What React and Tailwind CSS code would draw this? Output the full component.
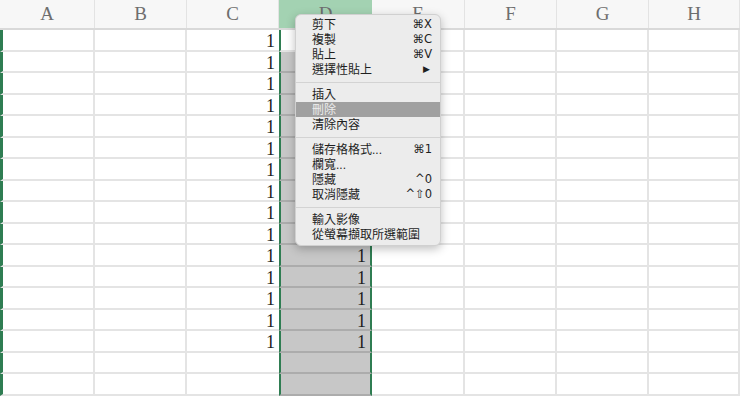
import React from 'react';

const cols = ['A', 'B', 'C', 'D', 'E', 'F', 'G', 'H'];
const widths = ['w-[95px]', 'w-[92px]', 'w-[92px]', 'w-[93px]', 'w-[93px]', 'w-[92px]', 'w-[92px]', 'w-[91px]'];
const rowCount = 17;

const menu = [
  [
    { label: '剪下', key: '⌘X' },
    { label: '複製', key: '⌘C' },
    { label: '貼上', key: '⌘V' },
    { label: '選擇性貼上', key: '▶', arrow: true },
  ],
  [
    { label: '插入' },
    { label: '刪除', active: true },
    { label: '清除內容' },
  ],
  [
    { label: '儲存格格式...', key: '⌘1' },
    { label: '欄寬...' },
    { label: '隱藏', key: '^0' },
    { label: '取消隱藏', key: '^⇧0' },
  ],
  [
    { label: '輸入影像' },
    { label: '從螢幕擷取所選範圍' },
  ],
];

const Cell = ({ col, row }) => {
  const isD = col === 3;
  // D1..D10 sit under the context menu
  const hasOne = (col === 2 && row < 15) || (isD && row >= 10 && row < 15);
  let cls = 'h-full flex items-center justify-end pr-[4px] pt-[3px] border-b-2 ';
  if (isD) {
    cls += row === 0
      ? 'bg-white border-b-[#e4e4e4] border-x-2 border-x-[#2f7d52]'
      : 'bg-[#c7c7c7] border-b-[#acacac] border-x-2 border-x-[#2f7d52]';
  } else {
    cls += 'bg-white border-b-[#e4e4e4] ' + (col === 2 ? '' : 'border-r-2 border-r-[#e4e4e4]');
  }
  if (col === 0) cls += ' border-l-[3px] border-l-[#2f7d52]';
  return (
    <div className={`${widths[col]} shrink-0 ${cls}`}>
      {hasOne && <span className="text-[18px] leading-none text-[#1e1e1e]">1</span>}
    </div>
  );
};

const ContextMenu = () => (
  <div className="absolute left-[295px] top-[14px] w-[146px] bg-[#ececec] rounded-[6px] border border-[#d0d0d0] shadow-[0_3px_10px_rgba(0,0,0,0.25)] pt-[2px] pb-[3px] text-[12px] text-[#1f1f1f] font-['Liberation_Sans','Noto_Sans_CJK_TC','DejaVu_Sans',sans-serif]">
    {menu.map((group, gi) => (
      <div key={gi}>
        {gi > 0 && (
          <div className="h-[10px] flex items-center">
            <div className="w-full h-px bg-[#d3d3d3]" />
          </div>
        )}
        {group.map((item) => (
          <div
            key={item.label}
            className={`h-[15px] flex items-center justify-between pl-[16px] pr-[8px] ${item.active ? 'bg-[#a0a0a0] text-[#ececec]' : ''}`}
          >
            <span className="leading-none">{item.label}</span>
            {item.key && (
              <span className={`leading-none font-['DejaVu_Sans',sans-serif] ${item.arrow ? 'text-[9px] pr-[2px]' : 'text-[11.5px]'}`}>{item.key}</span>
            )}
          </div>
        ))}
      </div>
    ))}
  </div>
);

export default function App() {
  return (
    <div className="relative w-[740px] h-[399px] overflow-hidden bg-white font-['Liberation_Serif',serif]">
      <div className="flex h-[30px] border-b-2 border-[#d9d9d9] bg-[#f7f7f7]">
        {cols.map((c, i) => (
          <div
            key={c}
            className={`${widths[i]} shrink-0 flex items-center justify-center text-[19px] text-[#6e6e6e] ${i === 3 ? 'bg-[#a3d2b2]' : 'border-r border-[#e3e3e3]'}`}
          >
            {c}
          </div>
        ))}
      </div>
      {Array.from({ length: rowCount }).map((_, r) => (
        <div key={r} className="flex h-[21.5px]">
          {cols.map((c, ci) => (
            <Cell key={c} col={ci} row={r} />
          ))}
        </div>
      ))}
      <ContextMenu />
    </div>
  );
}
